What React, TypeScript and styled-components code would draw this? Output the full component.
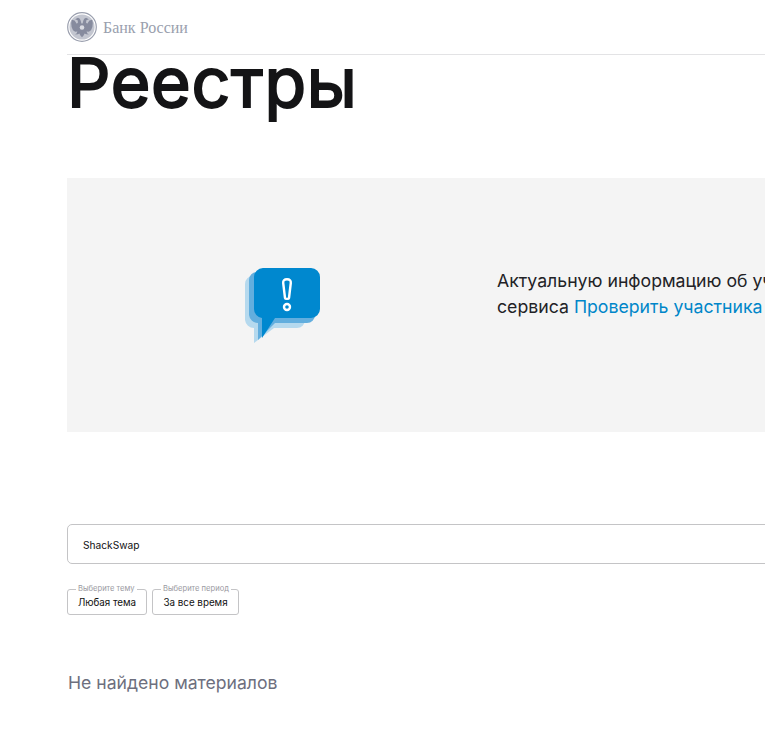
import styled, { createGlobalStyle } from 'styled-components'

const GlobalStyle = createGlobalStyle`
  html, body {
    margin: 0;
    padding: 0;
    background: #fff;
    overflow: hidden;
  }
  body {
    font-family: Inter, "Noto Sans", sans-serif;
    color: #1a1a1c;
  }
`

const Page = styled.div`
  width: 765px;
  height: 740px;
  overflow: hidden;
  padding-left: 67px;
  box-sizing: border-box;
`

const Content = styled.div`
  width: 1100px;
`

const Header = styled.header`
  height: 54px;
  display: flex;
  align-items: center;
  gap: 6px;
  border-bottom: 1px solid #e3e3e5;
`

const LogoText = styled.span`
  font-family: "Liberation Serif", serif;
  font-size: 16px;
  padding-top: 2px;
  color: #9a9fae;
`

const Title = styled.h1`
  margin: 0;
  height: 123px;
  font-size: 68px;
  line-height: 54px;
  font-weight: 400;
  letter-spacing: 0.7px;
  -webkit-text-stroke: 2px #141416;
  color: #141416;
`

const Notice = styled.section`
  height: 254px;
  box-sizing: border-box;
  background: #f4f4f4;
  display: flex;
  align-items: flex-start;
  padding: 90px 0 0 178px;
`

const NoticeIcon = styled.svg`
  flex-shrink: 0;
`

const NoticeText = styled.p`
  margin: 0 0 0 176px;
  font-size: 17.7px;
  line-height: 26px;
  white-space: nowrap;
  color: #222226;
`

const NoticeLink = styled.a`
  color: #0086c9;
  text-decoration: none;
`

const Search = styled.div`
  margin-top: 92px;
  height: 40px;
  box-sizing: border-box;
  display: flex;
  align-items: center;
  padding: 1px 0 0 15px;
  border: 1px solid #c4c4c6;
  border-radius: 5px;
  font-size: 10.2px;
  color: #111;
`

const Filters = styled.div`
  display: flex;
  gap: 5px;
  margin-top: 21px;
`

const Filter = styled.fieldset<{ $width: number }>`
  margin: 0;
  padding: 0 0 3px;
  width: ${props => props.$width}px;
  height: 30px;
  min-width: 0;
  box-sizing: border-box;
  display: flex;
  align-items: center;
  justify-content: center;
  border: 1px solid #c4c4c6;
  border-radius: 3px;
  font-size: 9.8px;
  color: #111;
`

const FilterLabel = styled.legend`
  padding: 0 2px;
  margin-left: 8px;
  font-size: 7.6px;
  line-height: 8px;
  color: #9a9aa2;
  white-space: nowrap;
`

const Empty = styled.p`
  margin: 57px 0 0 1px;
  font-size: 17.6px;
  line-height: 22px;
  color: #6d6f7e;
`

function LogoIcon() {
  return (
    <svg width="30" height="30" viewBox="0 0 30 30">
      <circle cx="15" cy="15" r="14.3" fill="#fff" stroke="#9a9fae" strokeWidth="1.2" />
      <circle cx="15" cy="15" r="12.6" fill="#c3c6d0" />
      {/* two-headed eagle */}
      <path
        fill="#868b9e"
        d="M14.4 11.500 13.600 8.400 12.800 6.800 11 5.800 9.400 6.400 8.200 7.900 9.700 7.700 10.600 8.300 11 10.400 9.800 11.800 7.600 8.600 4.800 7.700 4.200 11 4.600 15 6 18.200 8.200 19.800 10.400 19.600 9.600 21.500 8 22.600 10.800 22.200 12.400 21.400 13.400 23.400 15 25.200 16.600 23.400 17.600 21.400 19.200 22.200 22 22.600 20.400 21.500 19.600 19.600 21.800 19.800 24 18.200 25.400 15 25.800 11 25.200 7.700 22.400 8.600 20.200 11.800 19 10.400 19.400 8.300 20.300 7.700 21.800 7.900 20.600 6.400 19 5.800 17.200 6.800 16.400 8.400 15.600 11.500z"
      />
      <circle cx="15" cy="15.500" r="2.300" fill="#d9dbe2" />
    </svg>
  )
}

function AlertIcon() {
  return (
    <NoticeIcon width="76" height="76" viewBox="0 0 76 76">
      <path
        fill="#b5d9ee"
        d="M8 8h44a8 8 0 0 1 8 8v36a8 8 0 0 1-8 8H29L9 75V60a9 9 0 0 1-9-8V16a8 8 0 0 1 8-8z"
      />
      <path
        fill="#62aede"
        d="M12 4h50a8 8 0 0 1 8 8v35a8 8 0 0 1-8 8H30L13 72V55a9 9 0 0 1-9-8V12a8 8 0 0 1 8-8z"
      />
      <path
        fill="#0088cf"
        d="M18 0h48a9 9 0 0 1 9 9v32a9 9 0 0 1-9 9H30L17 70V50a9 9 0 0 1-8-9V9a9 9 0 0 1 9-9z"
      />
      <path
        fill="none"
        stroke="#fff"
        strokeWidth="2.400"
        strokeLinejoin="round"
        d="M42 11.200c2.800 0 4 1.500 3.800 3.800L44 30c-.2 1.200-3.800 1.200-4 0l-1.800-15c-.2-2.300 1-3.800 3.800-3.800z"
      />
      <circle cx="42" cy="39" r="3" fill="none" stroke="#fff" strokeWidth="2.400" />
    </NoticeIcon>
  )
}

export default function App() {
  return (
    <Page>
      <GlobalStyle />
      <Content>
        <Header>
          <LogoIcon />
          <LogoText>Банк России</LogoText>
        </Header>
        <Title>Реестры</Title>
        <Notice>
          <AlertIcon />
          <NoticeText>
            Актуальную информацию об участниках рынка можно получить с помощью
            <br />
            сервиса <NoticeLink href="#">Проверить участника</NoticeLink>
          </NoticeText>
        </Notice>
        <Search>ShackSwap</Search>
        <Filters>
          <Filter $width={80}>
            <FilterLabel>Выберите тему</FilterLabel>
            Любая тема
          </Filter>
          <Filter $width={87}>
            <FilterLabel>Выберите период</FilterLabel>
            За все время
          </Filter>
        </Filters>
        <Empty>Не найдено материалов</Empty>
      </Content>
    </Page>
  )
}
